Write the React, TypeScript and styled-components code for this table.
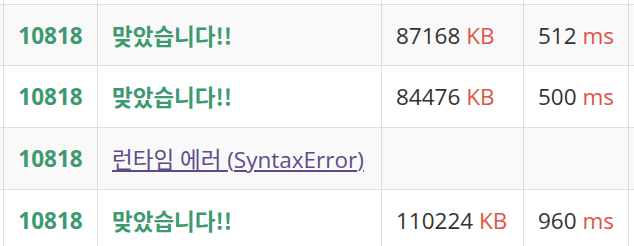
import React from 'react';
import styled, { createGlobalStyle } from 'styled-components';

const GlobalStyle = createGlobalStyle`
  html, body {
    margin: 0;
    padding: 0;
    background: #fff;
    overflow: hidden;
  }
  body {
    font-family: "Open Sans", "Noto Sans CJK KR", sans-serif;
    color: #333;
  }
`;

const Viewport = styled.div`
  width: 634px;
  height: 246px;
  overflow: hidden;
`;

const Table = styled.table`
  border-collapse: collapse;
  table-layout: fixed;
  width: 760px;
  margin: -58px 0 0 -97px;
  font-size: 22.5px;
`;

const Row = styled.tr<{ $striped?: boolean }>`
  background: ${({ $striped }) => ($striped ? '#f9f9f9' : '#fff')};
`;

const Cell = styled.td<{ $center?: boolean }>`
  border: 1px solid #ddd;
  height: 60.7px;
  padding: 0 14px;
  text-align: ${({ $center }) => ($center ? 'center' : 'left')};
  vertical-align: middle;
  white-space: nowrap;
`;

const ProblemId = styled.span`
  color: #3d9970;
  font-weight: 700;
`;

const Accepted = styled.span`
  color: #3d9970;
  font-weight: 700;
  font-family: "Noto Sans CJK KR", sans-serif;
`;

const RuntimeError = styled.a`
  color: #5f4b8b;
  text-decoration: underline;
  font-family: "Open Sans", "Noto Sans CJK KR", sans-serif;
`;

const Unit = styled.span`
  color: #e05546;
`;

type Submission = {
  problem: number;
  result: 'ac' | 'rte';
  detail?: string;
  memory?: number;
  time?: number;
};

const rows: Submission[] = [
  { problem: 10818, result: 'ac', memory: 87168, time: 512 },
  { problem: 10818, result: 'ac', memory: 84476, time: 500 },
  { problem: 10818, result: 'rte', detail: 'SyntaxError' },
  { problem: 10818, result: 'ac', memory: 110224, time: 960 },
];

export default function App() {
  return (
    <Viewport>
      <GlobalStyle />
      <Table>
        <colgroup>
          <col style={{ width: 100 }} />
          <col style={{ width: 94 }} />
          <col style={{ width: 284 }} />
          <col style={{ width: 142 }} />
          <col style={{ width: 105 }} />
          <col style={{ width: 35 }} />
        </colgroup>
        <tbody>
          <Row>
            <Cell />
            <Cell />
            <Cell />
            <Cell />
            <Cell />
            <Cell />
          </Row>
          {rows.map((r, i) => (
            <Row key={i} $striped={i % 2 === 0}>
              <Cell />
              <Cell $center>
                <ProblemId>{r.problem}</ProblemId>
              </Cell>
              <Cell>
                {r.result === 'ac' ? (
                  <Accepted>맞았습니다!!</Accepted>
                ) : (
                  <RuntimeError href="#">런타임 에러 ({r.detail})</RuntimeError>
                )}
              </Cell>
              <Cell>
                {r.memory !== undefined && (
                  <>
                    {r.memory} <Unit>KB</Unit>
                  </>
                )}
              </Cell>
              <Cell>
                {r.time !== undefined && (
                  <>
                    {r.time} <Unit>ms</Unit>
                  </>
                )}
              </Cell>
              <Cell />
            </Row>
          ))}
        </tbody>
      </Table>
    </Viewport>
  );
}
